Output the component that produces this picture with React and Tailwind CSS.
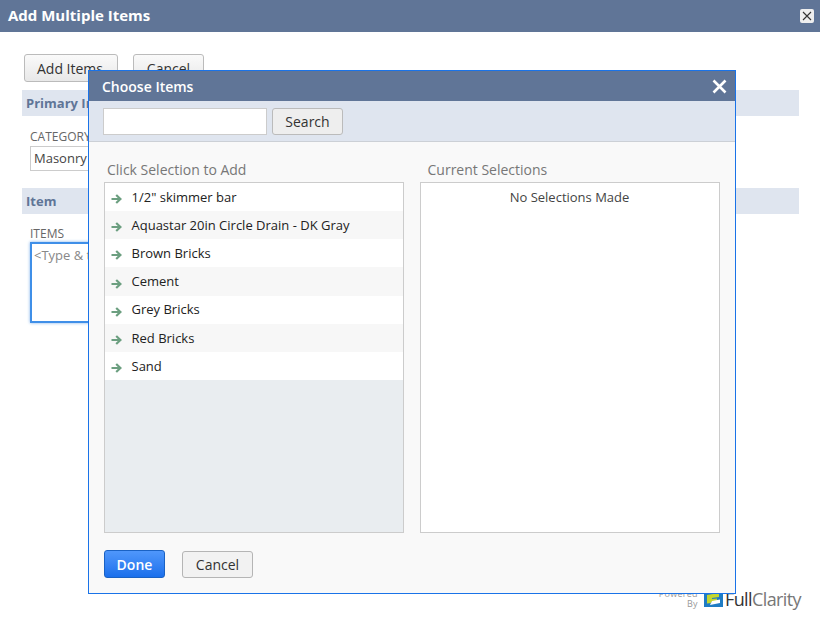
import React from "react";

const items = ['1/2" skimmer bar', "Aquastar 20in Circle Drain - DK Gray", "Brown Bricks", "Cement", "Grey Bricks", "Red Bricks", "Sand"];

function Arrow() {
  return (
    <svg width="11" height="10" viewBox="0 0 11 10" className="shrink-0 mt-[3px]">
      <path d="M0.5 5H9M5.2 1L9.4 5L5.2 9" fill="none" stroke="#6c9f80" strokeWidth="2.2" />
    </svg>
  );
}

function Logo() {
  return (
    <svg width="19" height="15" viewBox="0 0 19 15">
      <rect width="19" height="15" fill="#1f7cc4" />
      <path d="M3 3L15 1V5L8 6V7L13 6.5V9L7 10V11L3 11.5Z" fill="#c4d62e" />
      <path d="M8 9L16 7.5V11L6 13Z" fill="#ffffff" />
    </svg>
  );
}

export default function App() {
  return (
    <div className="relative h-[630px] w-[820px] overflow-hidden bg-white font-['Open_Sans',sans-serif] text-[13px] text-[#333]">
      <div className="flex h-8 items-center justify-between bg-[#607597] pl-2 pr-[6px]">
        <span className="pb-[2px] text-[15px] font-bold text-white">Add Multiple Items</span>
        <span className="flex h-[14px] w-[14px] items-center justify-center rounded-[2px] bg-[#eeeeee]">
          <svg width="10" height="10" viewBox="0 0 10 10">
            <path d="M1 1L9 9M9 1L1 9" stroke="#333" strokeWidth="1.1" />
          </svg>
        </span>
      </div>

      <div className="flex gap-[15px] pl-6 pt-[22px]">
        <button className="h-7 w-[94px] rounded-[3px] border border-[#bbb] bg-gradient-to-b from-[#fafafa] to-[#e8e8e8] pr-[2px] pt-[2px] text-sm text-[#333]">Add Items</button>
        <button className="h-7 w-[71px] rounded-[3px] border border-[#bbb] bg-gradient-to-b from-[#fafafa] to-[#e8e8e8] pt-[2px] text-sm text-[#333]">Cancel</button>
      </div>

      <div className="ml-[22px] mt-2 flex h-[26px] w-[777px] items-center bg-[#dfe5ef] pl-1 pt-[2px] text-[13px] font-bold text-[#607597]">Primary Information</div>
      <div className="ml-[30px] mt-[14px] text-xs leading-[14px] text-[#666]">CATEGORY</div>
      <div className="ml-[30px] mt-[2px] flex h-[25px] w-[200px] items-center border border-[#ccc] pl-[3px] text-[13px] text-[#444]">Masonry</div>

      <div className="ml-[22px] mt-[17px] flex h-[26px] w-[777px] items-center bg-[#dfe5ef] pl-1 pt-[2px] text-[13px] font-bold text-[#607597]">Item</div>
      <div className="ml-[30px] mt-[13px] text-xs leading-[14px] text-[#666]">ITEMS</div>
      <div className="ml-[30px] mt-px h-[81px] w-[200px] border-2 border-[#3f8fe8] pl-[2px] pt-px text-[13px] leading-5 text-[#888] shadow-[0_0_3px_#7fb0ea]">&lt;Type &amp; tab to add&gt;</div>

      <div className="absolute bottom-[21px] right-[19px] flex items-center">
        <div className="mr-[6px] text-right text-[9px] leading-[10px] tracking-[0.3px] text-[#999]">
          Powered<br />By
        </div>
        <Logo />
        <span className="ml-[2px] text-[18px] leading-5 tracking-[-0.6px] text-[#333]">
          Full<span className="text-[#777]">Clarity</span>
        </span>
      </div>

      <div className="absolute left-[88px] top-[70px] flex h-[524px] w-[648px] flex-col border border-[#1a73e8] bg-[#f9f9f9]">
        <div className="flex h-[30px] shrink-0 items-center justify-between bg-[#607597] pl-[13px] pr-2">
          <span className="pt-[2px] text-sm font-semibold text-white">Choose Items</span>
          <svg width="15" height="15" viewBox="0 0 15 15">
            <path d="M1.5 1.5L13.5 13.5M13.5 1.5L1.5 13.5" stroke="#fff" strokeWidth="2.6" />
          </svg>
        </div>

        <div className="flex h-[41px] shrink-0 gap-[5px] border-b border-[#ccd0d6] bg-[#dfe5ef] pl-[14px] pt-[7px]">
          <div className="h-[27px] w-[164px] border border-[#ccc] bg-white" />
          <button className="h-[27px] w-[71px] rounded-[3px] border border-[#bbb] bg-[#eeeeee] text-sm text-[#333]">Search</button>
        </div>

        <div className="flex gap-4 pl-[15px] pt-[17px]">
          <div className="w-[300px]">
            <div className="pb-[2px] pl-[3px] text-sm leading-[21px] text-[#777]">Click Selection to Add</div>
            <div className="h-[351px] border border-[#ccc] bg-[#e9edf0]">
              {items.map((item, i) => (
                <div key={item} className={`flex h-[28.17px] items-center gap-[9.5px] pl-[6px] pt-px text-[13px] text-[#222] ${i % 2 === 0 ? "bg-white" : "bg-[#f7f7f7]"}`}>
                  <Arrow />
                  <span>{item}</span>
                </div>
              ))}
            </div>
          </div>
          <div className="w-[300px]">
            <div className="pb-[2px] pl-[7.5px] text-sm leading-[21px] text-[#777]">Current Selections</div>
            <div className="h-[351px] border border-[#ccc] bg-white pr-px pt-[4px] text-center text-[13px] leading-[20px] text-[#444]">No Selections Made</div>
          </div>
        </div>

        <div className="flex items-end gap-[17px] pl-[15px] pt-[17px]">
          <button className="h-[28px] w-[61px] rounded-[3px] border border-[#1a62c4] bg-gradient-to-b from-[#4f97fb] to-[#1a70ec] pt-[2px] text-sm font-semibold text-white">Done</button>
          <button className="h-[27px] w-[71px] rounded-[3px] border border-[#b5b5b5] bg-[#f2f2f2] text-sm text-[#333]">Cancel</button>
        </div>
      </div>
    </div>
  );
}
